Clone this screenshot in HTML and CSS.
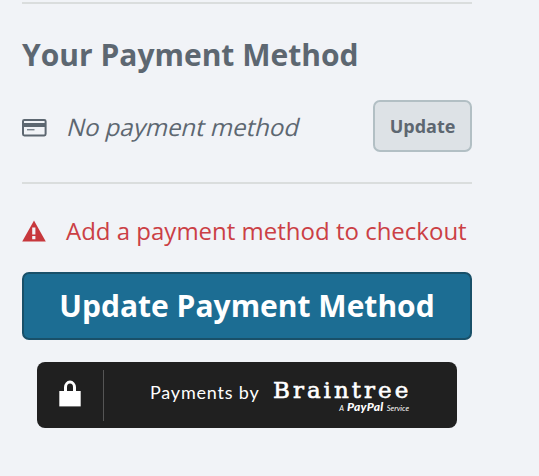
FILE: index.html
```html
<!DOCTYPE html>
<html lang="en">
<head>
    <meta charset="UTF-8">
    <meta name="viewport" content="width=device-width, initial-scale=1.0">
    <title>Your Payment Method</title>
    <link rel="stylesheet" href="styles.css">
</head>
<body>
    <div class="checkout">
        <section class="payment">
            <h2>Your Payment Method</h2>
            <div class="payment-row">
                <svg class="card-icon" width="25" height="18" viewBox="0 0 25 18">
                    <rect x="1" y="1" width="22.6" height="15.4" rx="1.3" fill="none" stroke="#5d6771" stroke-width="2"/>
                    <rect x="1" y="4" width="23" height="4" fill="#5d6771"/>
                    <path d="M5 10.7h7.5" stroke="#5d6771" stroke-width="1.4" stroke-opacity=".8"/>
                </svg>
                <span class="payment-text">No payment method</span>
                <button class="update-button">Update</button>
            </div>
        </section>
        <div class="warning">
            <svg class="warning-icon" width="24" height="22" viewBox="0 0 24 22">
                <path d="M12 0.4L23.8 21.6H0.2z" fill="#c7373c"/>
                <path d="M10.2 7.4h3.2v7h-3.2zM10.2 16h3.2v3.2h-3.2z" fill="#f1f3f7"/>
            </svg>
            <span class="warning-text">Add a payment method to checkout</span>
        </div>
        <button class="main-button">Update Payment Method</button>
        <div class="braintree">
            <div class="lock">
                <svg width="22" height="27" viewBox="0 0 22 27">
                    <path d="M6.5 12V7.3a4.5 5.2 0 0 1 9 0V12" fill="none" stroke="#fff" stroke-width="3"/>
                    <rect x="0.3" y="11" width="21.4" height="15.4" fill="#fff"/>
                </svg>
            </div>
            <span class="payments-by">Payments by</span>
            <div class="brand">
                <span class="brand-name">Braintree</span>
                <span class="brand-service">A <b>PayPal</b> Service</span>
            </div>
        </div>
    </div>
</body>
</html>
```

FILE: styles.css
```css
body {
    margin: 0;
    font-family: "Open Sans", sans-serif;
    background-color: #f1f3f7;
    color: #5d6771;
}
.checkout {
    width: 450px;
    padding: 2px 0 0 22px;
}
.payment {
    border-top: 2px solid #dadddd;
    border-bottom: 2px solid #dadddd;
    height: 178px;
}
h2 {
    margin: 30px 0 25px;
    font-size: 30px;
    line-height: 41px;
    font-weight: 700;
}
.payment-row {
    display: flex;
    align-items: center;
}
.card-icon {
    margin-top: 4px;
}
.payment-text {
    margin-left: 21px;
    font-size: 24px;
    white-space: nowrap;
    transform: skewX(-14deg);
}
button {
    box-sizing: border-box;
    font-family: inherit;
    font-weight: 700;
    padding: 0;
    border-radius: 7px;
    cursor: pointer;
}
.update-button {
    width: 99px;
    height: 52px;
    margin-left: auto;
    background-color: #dde2e6;
    border: 2px solid #b2bfc4;
    color: #5d6771;
    font-size: 18px;
}
.warning {
    display: flex;
    align-items: center;
    height: 34px;
    margin: 30px 0 24px;
    color: #cb3f45;
}
.warning-text {
    margin-left: 20px;
    padding-bottom: 2px;
    font-size: 24px;
    white-space: nowrap;
}
.main-button {
    display: block;
    width: 450px;
    height: 68px;
    padding-bottom: 2px;
    background-color: #1c6d93;
    border: 2px solid #195069;
    color: #fff;
    font-size: 30px;
}
.braintree {
    display: flex;
    align-items: center;
    width: 420px;
    height: 66px;
    margin: 22px 15px 0;
    border-radius: 8px;
    background-color: #202020;
    color: #fff;
}
.lock {
    display: flex;
    align-items: center;
    justify-content: center;
    width: 66px;
    height: 51px;
    border-right: 1px solid #555;
}
.lock svg {
    margin-bottom: 4px;
}
.payments-by {
    width: 111px;
    margin: 0 0 6px 46px;
    font-family: Lato, sans-serif;
    font-size: 18px;
    letter-spacing: 0.8px;
    white-space: nowrap;
}
.brand {
    display: flex;
    flex-direction: column;
    width: 136px;
    margin: 1px 0 0 12px;
}
.brand-name {
    font-family: "DejaVu Serif", serif;
    font-size: 23px;
    line-height: 25px;
    letter-spacing: 3px;
    -webkit-text-stroke: 0.6px #fff;
    white-space: nowrap;
}
.brand-service {
    align-self: flex-end;
    margin-top: -2px;
    font-family: Lato, sans-serif;
    font-size: 7.5px;
    line-height: 11px;
    font-style: italic;
    word-spacing: 1.5px;
    white-space: nowrap;
}
.brand-service b {
    font-size: 12px;
    font-weight: 900;
    letter-spacing: 0.3px;
}
```
